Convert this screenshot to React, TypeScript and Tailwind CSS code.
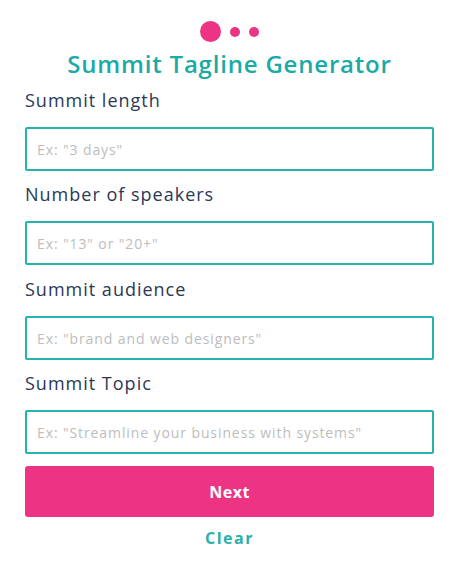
import React from "react";

const fields = [
  { label: "Summit length", placeholder: 'Ex: "3 days"', gap: "" },
  { label: "Number of speakers", placeholder: 'Ex: "13" or "20+"', gap: "mt-[10px]" },
  { label: "Summit audience", placeholder: 'Ex: "brand and web designers"', gap: "mt-[11px]" },
  { label: "Summit Topic", placeholder: 'Ex: "Streamline your business with systems"', gap: "mt-[10px]" },
];

export default function App() {
  return (
    <div
      className="min-h-[569px] bg-white pl-[25px] pr-[31px] pt-[21px]"
      style={{ fontFamily: '"Open Sans", sans-serif' }}
    >
      {/* step dots */}
      <div className="flex items-center justify-center gap-[9px]">
        <span className="h-[21px] w-[21px] rounded-full bg-[#ec3384]" />
        <span className="h-[10px] w-[10px] rounded-full bg-[#ec3384]" />
        <span className="h-[10px] w-[10px] rounded-full bg-[#ec3384]" />
      </div>

      <h1 className="mt-[6px] text-center text-[24px] font-semibold leading-[32px] tracking-[0.8px] text-[#1aaba6]">
        Summit Tagline Generator
      </h1>

      <form className="mt-[7px] flex flex-col">
        {fields.map((f) => (
          <div key={f.label} className={f.gap}>
            <label className="block text-[18px] leading-[26px] tracking-[1px] text-[#2b3856]">
              {f.label}
            </label>
            <input
              type="text"
              placeholder={f.placeholder}
              className="mt-[14px] h-[44px] w-full rounded-[2px] border-2 border-[#25b3ae] px-[10px] text-[14px] tracking-[0.9px] text-gray-700 outline-none placeholder:text-[#bdbdbd]"
            />
          </div>
        ))}

        <button
          type="button"
          className="mt-[12px] h-[51px] w-full rounded-[3px] bg-[#ec3384] text-[16px] font-bold tracking-[0.5px] text-white"
        >
          Next
        </button>

        <button
          type="button"
          className="mt-[9px] self-center text-[16px] font-bold tracking-[1.5px] text-[#2bb0ab]"
        >
          Clear
        </button>
      </form>
    </div>
  );
}
